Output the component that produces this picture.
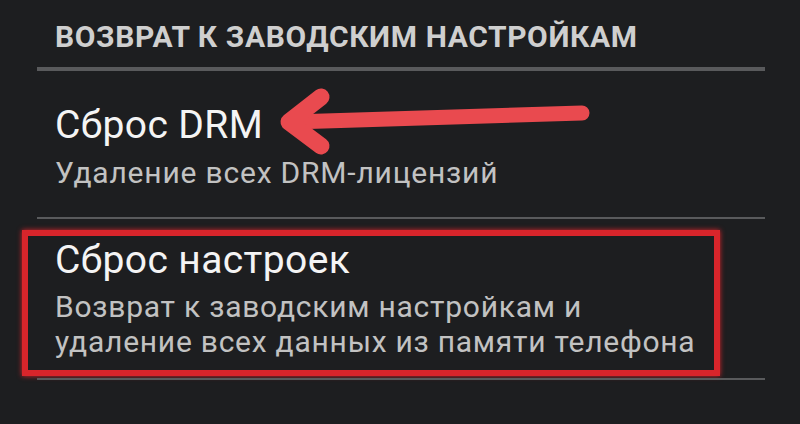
import React from 'react';

const Arrow = () => (
  <svg className="absolute left-0 top-0" width="800" height="424" viewBox="0 0 800 424">
    <g stroke="#e94a4f" strokeLinecap="round" strokeLinejoin="round" fill="none">
      <path d="M292 122 L582 113" strokeWidth="15" />
      <path d="M321 97 L289 122 L321 146" strokeWidth="17" />
    </g>
  </svg>
);

const Divider = ({ className }) => (
  <div className={`ml-[37px] w-[728px] bg-[#595a5c] ${className}`}></div>
);

export default function App() {
  return (
    <div
      className="relative w-[800px] h-[424px] overflow-hidden bg-[#1d1e20]"
      style={{ fontFamily: 'Roboto, "Noto Sans", sans-serif' }}
    >
      {/* section header */}
      <div className="pt-[22px] pl-[55px] text-[30px] leading-[30px] tracking-[0.6px] font-bold text-[#cfcfcf]">
        ВОЗВРАТ К ЗАВОДСКИМ НАСТРОЙКАМ
      </div>
      <Divider className="mt-[15px] h-[4px]" />

      {/* DRM reset */}
      <div className="pl-[55px]">
        <div className="mt-[35px] text-[39px] leading-[39px] tracking-[0.4px] text-[#f4f4f4]">Сброс DRM</div>
        <div className="mt-[13px] text-[30px] leading-[30px] tracking-[0.8px] text-[#c2c2c2]">Удаление всех DRM-лицензий</div>
      </div>
      <Divider className="mt-[29px] h-[2px]" />

      {/* factory reset, highlighted */}
      <div className="mt-[11px] ml-[22px] w-[698px] h-[146px] border-[6px] border-[#d8252b] shadow-[0_0_5px_#d8252b] pl-[27px] pt-[5px]">
        <div className="text-[39px] leading-[39px] tracking-[0.4px] text-[#f4f4f4]">Сброс настроек</div>
        <div className="mt-[9px] text-[30px] leading-[35px] tracking-[0.75px] text-[#c2c2c2]">
          <div>Возврат к заводским настройкам и</div>
          <div>удаление всех данных из памяти телефона</div>
        </div>
      </div>
      <Divider className="mt-[2px] h-[2px]" />

      <Arrow />
    </div>
  );
}
